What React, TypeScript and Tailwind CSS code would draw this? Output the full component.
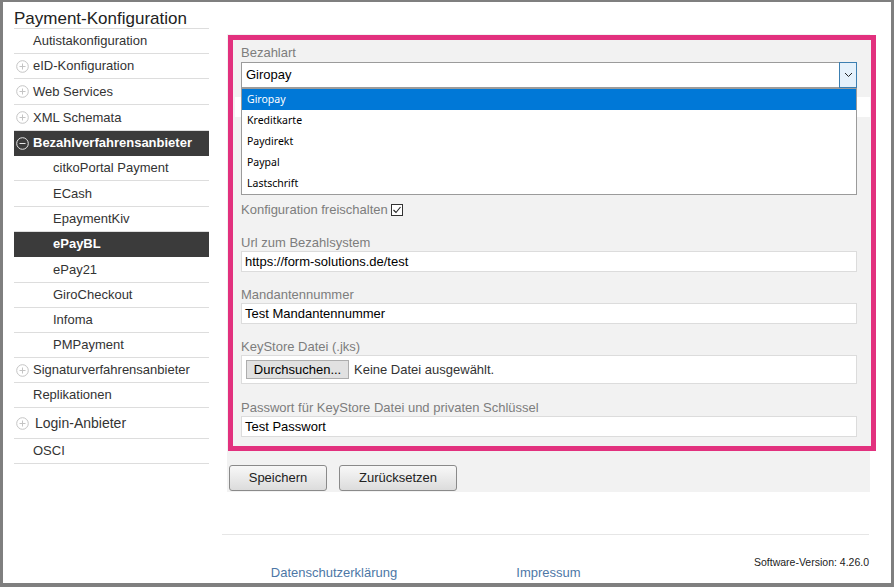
import React from "react";

type Row = {
  label: string;
  kind: "top" | "icon" | "sub" | "active" | "activeSub";
  h: string;
  big?: boolean;
};

const rows: Row[] = [
  { label: "Autistakonfiguration", kind: "top", h: "h-[25px]" },
  { label: "eID-Konfiguration", kind: "icon", h: "h-[25px]" },
  { label: "Web Services", kind: "icon", h: "h-[26px]" },
  { label: "XML Schemata", kind: "icon", h: "h-[26px]" },
  { label: "Bezahlverfahrensanbieter", kind: "active", h: "h-[25px]" },
  { label: "citkoPortal Payment", kind: "sub", h: "h-[25px]" },
  { label: "ECash", kind: "sub", h: "h-[26px]" },
  { label: "EpaymentKiv", kind: "sub", h: "h-[25px]" },
  { label: "ePayBL", kind: "activeSub", h: "h-[25px]" },
  { label: "ePay21", kind: "sub", h: "h-[26px]" },
  { label: "GiroCheckout", kind: "sub", h: "h-[25px]" },
  { label: "Infoma", kind: "sub", h: "h-[25px]" },
  { label: "PMPayment", kind: "sub", h: "h-[25px]" },
  { label: "Signaturverfahrensanbieter", kind: "icon", h: "h-[25px]" },
  { label: "Replikationen", kind: "top", h: "h-[25px]" },
  { label: "Login-Anbieter", kind: "icon", h: "h-[31px]", big: true },
  { label: "OSCI", kind: "top", h: "h-[25px]" },
];

function PlusIcon() {
  return (
    <svg width="13" height="13" viewBox="0 0 13 13" className="shrink-0">
      <circle cx="6.5" cy="6.5" r="5.8" fill="none" stroke="#c4c4c4" strokeWidth="1" />
      <path d="M3.5 6.5h6M6.5 3.5v6" stroke="#c4c4c4" strokeWidth="1" />
    </svg>
  );
}

function MinusIcon() {
  return (
    <svg width="13" height="13" viewBox="0 0 13 13" className="shrink-0">
      <circle cx="6.5" cy="6.5" r="5.8" fill="none" stroke="#e6e6e6" strokeWidth="1" />
      <path d="M3.5 6.5h6" stroke="#e6e6e6" strokeWidth="1" />
    </svg>
  );
}

function Sidebar() {
  return (
    <div className="ml-[11px] w-[195px] shrink-0">
      <div className="h-[27px] pt-[7px] text-[17px] leading-[19px] text-[#222] border-b border-[#dddddd] whitespace-nowrap">
        Payment-Konfiguration
      </div>
      {rows.map((r) => {
        if (r.kind === "active") {
          return (
            <div key={r.label} className={`${r.h} flex items-center gap-[4px] pl-[2px] bg-[#3b3b3b] border-b border-[#3b3b3b] text-white font-bold text-[13px]`}>
              <MinusIcon />
              <span>{r.label}</span>
            </div>
          );
        }
        if (r.kind === "activeSub") {
          return (
            <div key={r.label} className={`${r.h} flex items-center pl-[39px] bg-[#3b3b3b] border-b border-[#3b3b3b] text-white font-bold text-[13px]`}>
              {r.label}
            </div>
          );
        }
        if (r.kind === "icon") {
          return (
            <div key={r.label} className={`${r.h} flex items-center pl-[2px] border-b border-[#dddddd] text-[#333] ${r.big ? "gap-[6px] text-[14px]" : "gap-[4px] text-[13px]"}`}>
              <PlusIcon />
              <span>{r.label}</span>
            </div>
          );
        }
        if (r.kind === "sub") {
          return (
            <div key={r.label} className={`${r.h} flex items-center pl-[39px] border-b border-[#dddddd] text-[13px] text-[#333]`}>
              {r.label}
            </div>
          );
        }
        return (
          <div key={r.label} className={`${r.h} flex items-center pl-[19px] border-b border-[#dddddd] text-[13px] text-[#333]`}>
            {r.label}
          </div>
        );
      })}
    </div>
  );
}

function Label({ children, className = "" }: { children: React.ReactNode; className?: string }) {
  return <div className={`text-[13px] leading-[15px] text-[#7d7d7d] whitespace-nowrap ${className}`}>{children}</div>;
}

function TextInput({ value }: { value: string }) {
  return (
    <div className="mt-[1px] h-[21px] w-[616px] border border-[#dcdcdc] bg-white flex items-center pl-[3px] text-[13px] text-black">
      {value}
    </div>
  );
}

const options = ["Giropay", "Kreditkarte", "Paydirekt", "Paypal", "Lastschrift"];

function Main() {
  return (
    <div className="ml-[13px] w-[648px] shrink-0">
      <div className="mt-[32px] ml-[5px] w-[643px] bg-[#f2f2f2] pt-[1px] pb-[1px] pl-[1px]">
        <div className="w-[648px] border-[5px] border-[#e2317e] pt-[5px] pl-[8px] pr-[14px] pb-[9px] bg-[#f2f2f2]">
          <Label>Bezahlart</Label>
          <div className="relative mt-[2px] w-[616px]">
            <div className="h-[26px] border border-[#9b9b9b] bg-white flex items-center pl-[4px] text-[13px] text-black">
              Giropay
            </div>
            <div className="absolute right-0 top-0 h-[26px] w-[18px] bg-[#e5f1fb] border border-[#3c7fb1] flex items-center justify-center">
              <svg width="9" height="6" viewBox="0 0 9 6">
                <path d="M1 1l3.5 3.5L8 1" fill="none" stroke="#222" strokeWidth="1" />
              </svg>
            </div>
            <div className="absolute left-0 top-[26px] w-[616px] h-[107px] border border-[#9b9b9b] bg-white z-10 font-['Noto_Sans',sans-serif] text-[10.5px]">
              {options.map((o, i) => (
                <div
                  key={o}
                  className={`h-[21px] flex items-center pl-[5px] ${i === 0 ? "bg-[#0078d7] text-white" : "text-black"}`}
                >
                  {o}
                </div>
              ))}
            </div>
          </div>
          <div className="mt-[9px] -ml-[6px] h-[20px] w-[635px] bg-white" />
          <div className="mt-[85px] h-[15px] flex items-center gap-[3px]">
            <Label>Konfiguration freischalten</Label>
            <div className="w-[12px] h-[12px] border border-[#333] bg-white flex items-center justify-center">
              <svg width="10" height="10" viewBox="0 0 10 10">
                <path d="M1.5 5l2.5 2.5L8.5 2" fill="none" stroke="#222" strokeWidth="1.1" />
              </svg>
            </div>
          </div>
          <Label className="mt-[18px]">Url zum Bezahlsystem</Label>
          <TextInput value="https://form-solutions.de/test" />
          <Label className="mt-[15px]">Mandantennummer</Label>
          <TextInput value="Test Mandantennummer" />
          <Label className="mt-[15px]">KeyStore Datei (.jks)</Label>
          <div className="mt-[1px] h-[29px] w-[616px] border border-[#dcdcdc] bg-white flex items-center pl-[4px] gap-[5px] text-[13px]">
            <div className="h-[19px] w-[103px] border border-[#adadad] bg-[#e1e1e1] flex items-center justify-center text-black">
              Durchsuchen...
            </div>
            <span className="text-[#333]">Keine Datei ausgewählt.</span>
          </div>
          <Label className="mt-[16px]">Passwort für KeyStore Datei und privaten Schlüssel</Label>
          <TextInput value="Test Passwort" />
        </div>
        <div className="mt-[14px] ml-[1px] flex gap-[12px]">
          <div className="h-[26px] w-[98px] border border-[#8a8a8a] rounded-[3px] bg-linear-to-b from-[#f8f8f8] to-[#dcdcdc] flex items-center justify-center text-[13px] text-[#222]">
            Speichern
          </div>
          <div className="h-[26px] w-[118px] border border-[#8a8a8a] rounded-[3px] bg-linear-to-b from-[#f8f8f8] to-[#dcdcdc] flex items-center justify-center text-[13px] text-[#222]">
            Zurücksetzen
          </div>
        </div>
      </div>
      <div className="mt-[42px] w-[647px] border-t border-[#e6e6e6] flex">
        <div className="w-[224px] pt-[30px] text-center text-[13px] leading-[15px] text-[#4d77a6]">Datenschutzerklärung</div>
        <div className="w-[205px] pt-[30px] text-center text-[13px] leading-[15px] text-[#4d77a6]">Impressum</div>
        <div className="flex-1 pt-[21px] text-right text-[10.5px] leading-[12px] text-[#222] whitespace-nowrap">
          Software-Version: 4.26.0
        </div>
      </div>
    </div>
  );
}

export default function App() {
  return (
    <div className="w-[894px] h-[587px] bg-white border-[#7f7f7f] border-t-2 border-l-[3px] border-r-[3px] border-b-4 font-['Liberation_Sans',Arial,sans-serif] text-[#333] flex overflow-hidden">
      <Sidebar />
      <Main />
    </div>
  );
}
